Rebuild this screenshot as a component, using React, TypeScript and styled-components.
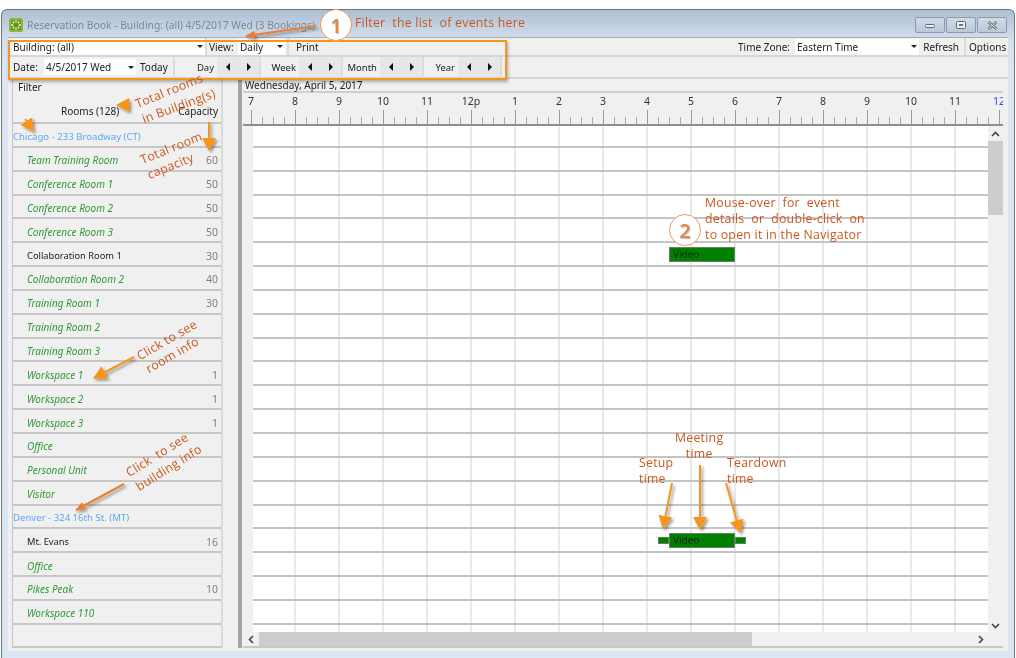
import * as React from "react";
import styled, { createGlobalStyle } from "styled-components";

const ORANGE = "#f7941d";
const NOTE = "#c8581c";
const ROW_HEIGHT = 23.85;

const GlobalStyle = createGlobalStyle`
  html, body {
    margin: 0;
    padding: 0;
    background: white;
  }
`;

const Page = styled.div`
  position: relative;
  width: 1016px;
  height: 658px;
  padding: 9px 1px 0;
  box-sizing: border-box;
  overflow: hidden;
  background: white;
  font-family: "Noto Sans", "Liberation Sans", sans-serif;
  font-size: 10px;
  color: #222;
  filter: blur(0.35px);
`;

const Window = styled.div`
  display: flex;
  flex-direction: column;
  height: 649px;
  padding: 0 6px 7px;
  box-sizing: border-box;
  border: 1px solid #70757c;
  border-bottom: none;
  border-radius: 6px 6px 0 0;
  background: linear-gradient(to bottom, #aebfd3 0, #d3dfec 30px, #dbe7f4 60px);
`;

const TitleBar = styled.div`
  display: flex;
  align-items: center;
  height: 27px;
  flex: none;
`;

const AppIcon = styled.svg`
  width: 14px;
  height: 14px;
  margin: 2px 4px 0 1px;
  flex: none;
`;

const Title = styled.div`
  flex: 1;
  margin-top: 2px;
  font-size: 10.3px;
  color: #7f8894;
  white-space: nowrap;
`;

const WindowButtons = styled.div`
  display: flex;
  gap: 1px;
  margin: 3px 1px 0 0;
`;

const WindowButton = styled.div`
  display: flex;
  align-items: center;
  justify-content: center;
  width: 28px;
  height: 14px;
  border: 1px solid #8c9aad;
  border-radius: 2px;
  background: linear-gradient(to bottom, #d0dbe8, #b9c8da);
  color: #555;
`;

const Client = styled.div`
  flex: 1;
  display: flex;
  flex-direction: column;
  min-height: 0;
  border-top: 1px solid #a5adb5;
  background: #f0f0f0;
`;

const ToolRow = styled.div<{ $height: number }>`
  display: flex;
  align-items: center;
  flex: none;
  height: ${(p) => p.$height}px;
  padding-left: 5px;
  border-bottom: 2px solid #d6d6d6;
  white-space: nowrap;
`;

const Combo = styled.div<{ $width: number; $flush?: boolean }>`
  display: flex;
  align-items: center;
  justify-content: space-between;
  flex: none;
  width: ${(p) => p.$width}px;
  height: 16px;
  box-sizing: border-box;
  padding: 0 2px 0 ${(p) => (p.$flush ? 0 : 2)}px;
  background: white;
`;

const ComboArrow = styled.span`
  width: 0;
  height: 0;
  border-left: 3px solid transparent;
  border-right: 3px solid transparent;
  border-top: 3px solid #222;
`;

const Label = styled.span<{ $width?: number; $right?: boolean; $inset?: number }>`
  flex: none;
  box-sizing: border-box;
  ${(p) => (p.$width ? `width: ${p.$width}px;` : "")}
  ${(p) => (p.$right ? "text-align: right;" : "")}
  ${(p) => (p.$inset ? `padding-left: ${p.$inset}px;` : "")}
`;

const Separator = styled.div<{ $gap?: number }>`
  flex: none;
  width: 2px;
  height: 100%;
  margin-left: ${(p) => p.$gap ?? 0}px;
  background: #dcdcdc;
`;

const Spacer = styled.div`
  flex: 1;
`;

const NavGroup = styled.div<{ $width: number }>`
  display: flex;
  align-items: center;
  justify-content: flex-end;
  flex: none;
  width: ${(p) => p.$width}px;
  height: 100%;
  box-sizing: border-box;
  border-right: 2px solid #dcdcdc;
`;

const NavLabel = styled.span`
  margin-right: 3px;
  font-size: 9.5px;
`;

const NavButton = styled.div`
  display: flex;
  align-items: center;
  justify-content: center;
  flex: none;
  width: 21px;
  height: 100%;
  background: #e7e7e7;
`;

const ArrowLeft = styled.span`
  border-top: 4px solid transparent;
  border-bottom: 4px solid transparent;
  border-right: 4px solid #111;
`;

const ArrowRight = styled.span`
  border-top: 4px solid transparent;
  border-bottom: 4px solid transparent;
  border-left: 4px solid #111;
`;

const Body = styled.div`
  flex: 1;
  display: flex;
  min-height: 0;
  padding: 0 5px 3px 4px;
`;

const Sidebar = styled.div`
  display: flex;
  flex-direction: column;
  flex: none;
  width: 211px;
  border-left: 1px solid #c4c4c4;
  border-right: 2px solid #dadada;
  border-bottom: 2px solid #c8c8c8;
  box-sizing: border-box;
`;

const FilterLabel = styled.div`
  height: 22px;
  padding: 1px 0 0 5px;
  box-sizing: border-box;
`;

const SidebarHeader = styled.div`
  display: flex;
  justify-content: space-between;
  flex: none;
  height: 18px;
  padding: 3px 3px 0 48px;
  border-bottom: 2px solid #c6c6c6;
`;

const Row = styled.div`
  display: flex;
  align-items: center;
  justify-content: space-between;
  flex: none;
  height: ${ROW_HEIGHT}px;
  box-sizing: border-box;
  padding: 3px 3px 0 0;
  border-bottom: 2px solid #c6c6c6;
`;

const RoomName = styled.span<{ $plain: boolean }>`
  padding-left: 14px;
  font-size: ${(p) => (p.$plain ? 9.3 : 10)}px;
  font-style: ${(p) => (p.$plain ? "normal" : "italic")};
  color: ${(p) => (p.$plain ? "#222" : "#2f9a35")};
`;

const BuildingName = styled.span`
  font-size: 9.6px;
  color: #5ca8f5;
`;

const Capacity = styled.span`
  font-size: 10.5px;
  color: #808080;
`;

const Splitter = styled.div`
  flex: none;
  width: 4px;
  margin-left: 15px;
  background: #a4a4a4;
`;

const Schedule = styled.div`
  flex: 1;
  display: flex;
  flex-direction: column;
  min-width: 0;
  margin-left: 1px;
  border-bottom: 2px solid #c8c8c8;
`;

const DateHeader = styled.div`
  display: flex;
  align-items: center;
  flex: none;
  height: 12px;
  padding-left: 2px;
  border-bottom: 2px solid #cfcfcf;
`;

const Ruler = styled.div`
  position: relative;
  flex: none;
  height: 31px;
  overflow: hidden;
  border-bottom: 2px solid #8e8e8e;
`;

const HourLabel = styled.span<{ $blue: boolean }>`
  position: absolute;
  top: 1px;
  transform: translateX(-50%);
  font-size: 10.5px;
  color: ${(p) => (p.$blue ? "#3a3aff" : "#333")};
`;

const Ticks = styled.div`
  position: absolute;
  left: 8px;
  right: 0;
  bottom: 0;
  height: 14px;
  background-image: linear-gradient(to right, #999 1px, transparent 1px),
    linear-gradient(to right, #aaa 1px, transparent 1px);
  background-size: 44px 14px, 11px 7px;
  background-repeat: repeat-x;
  background-position: 0 0, 0 100%;
`;

const GridArea = styled.div`
  flex: 1;
  display: grid;
  grid-template-columns: 1fr 15px;
  grid-template-rows: 1fr 14px;
  min-height: 0;
`;

const Grid = styled.div`
  position: relative;
  margin-left: 10px;
  overflow: hidden;
  background-color: white;
  background-image: linear-gradient(to right, #e8e8e8 2px, transparent 2px);
  background-size: 44px 100%;
  background-position: 41px 0;
`;

const GridRow = styled.div`
  height: ${ROW_HEIGHT}px;
  box-sizing: border-box;
  border-bottom: 2px solid #c4c4c4;

  &:first-child {
    margin-top: -2px;
  }
`;

const EventBar = styled.div<{ $left: number; $top: number; $width: number }>`
  position: absolute;
  left: ${(p) => p.$left}px;
  top: ${(p) => p.$top}px;
  width: ${(p) => p.$width}px;
  height: 15px;
  box-sizing: border-box;
  padding-left: 3px;
  line-height: 13px;
  border: 1px solid #6c7c6c;
  background: #008000;
  color: #0b2b0b;
`;

const Buffer = styled.div<{ $left: number; $top: number }>`
  position: absolute;
  left: ${(p) => p.$left}px;
  top: ${(p) => p.$top}px;
  width: 11px;
  height: 7px;
  box-sizing: border-box;
  border: 1px solid #5f7f5f;
  background: #008000;
`;

const VScroll = styled.div`
  display: flex;
  flex-direction: column;
  align-items: center;
  padding-top: 1px;
  background: #f0f0f0;
`;

const VThumb = styled.div`
  flex: none;
  width: 100%;
  height: 74px;
  margin-bottom: auto;
  background: #cdcdcd;
`;

const HScroll = styled.div`
  display: flex;
  align-items: center;
  padding-left: 1px;
  background: #f0f0f0;
`;

const HThumb = styled.div`
  flex: none;
  width: 493px;
  height: 100%;
  margin-right: auto;
  background: #cdcdcd;
`;

const ScrollButton = styled.div`
  display: flex;
  align-items: center;
  justify-content: center;
  flex: none;
  width: 15px;
  height: 14px;
  color: #444;
`;

const Overlay = styled.div`
  position: absolute;
  inset: 0;
  pointer-events: none;
`;

const Note = styled.div<{ $x: number; $y: number; $rotate?: number; $center?: boolean }>`
  position: absolute;
  left: ${(p) => p.$x}px;
  top: ${(p) => p.$y}px;
  transform: rotate(${(p) => p.$rotate ?? 0}deg);
  transform-origin: left top;
  font-family: "Open Sans", "Noto Sans", sans-serif;
  font-size: 12.3px;
  line-height: 16px;
  letter-spacing: 0.25px;
  color: ${NOTE};
  text-align: ${(p) => (p.$center ? "center" : "left")};
  white-space: pre;
`;

const Badge = styled.div<{ $x: number; $y: number }>`
  position: absolute;
  left: ${(p) => p.$x}px;
  top: ${(p) => p.$y}px;
  display: flex;
  align-items: center;
  justify-content: center;
  width: 32px;
  height: 32px;
  box-sizing: border-box;
  border: 1px solid #ef9a62;
  border-radius: 50%;
  background: white;
  font-family: "Open Sans", "Noto Sans", sans-serif;
  font-size: 20px;
  font-weight: 600;
  color: #e58646;
  text-shadow: 1px 1px 1px #bbb;
`;

const Highlight = styled.div`
  position: absolute;
  left: 8px;
  top: 40px;
  width: 499px;
  height: 40px;
  box-sizing: border-box;
  border: 2px solid ${ORANGE};
  box-shadow: 1px 2px 3px rgba(0, 0, 0, 0.3);
`;

const Arrows = styled.svg`
  position: absolute;
  left: 0;
  top: 0;
  width: 1016px;
  height: 658px;
`;

const rooms: [string, boolean, string][] = [
  ["Team Training Room", false, "60"],
  ["Conference Room 1", false, "50"],
  ["Conference Room 2", false, "50"],
  ["Conference Room 3", false, "50"],
  ["Collaboration Room 1", true, "30"],
  ["Collaboration Room 2", false, "40"],
  ["Training Room 1", false, "30"],
  ["Training Room 2", false, ""],
  ["Training Room 3", false, ""],
  ["Workspace 1", false, "1"],
  ["Workspace 2", false, "1"],
  ["Workspace 3", false, "1"],
  ["Office", false, ""],
  ["Personal Unit", false, ""],
  ["Visitor", false, ""],
];

const denverRooms: [string, boolean, string][] = [
  ["Mt. Evans", true, "16"],
  ["Office", false, ""],
  ["Pikes Peak", false, "10"],
  ["Workspace 110", false, ""],
];

const hours = ["7", "8", "9", "10", "11", "12p", "1", "2", "3", "4", "5", "6", "7", "8", "9", "10", "11", "12"];

// from, to in page pixels, arrow head drawn by the marker
const arrowLines = [
  { x1: 316, y1: 26, x2: 246, y2: 36, color: "#ed7d31", head: "thin" },
  { x1: 209, y1: 122, x2: 209, y2: 150, color: ORANGE, head: "fat" },
  { x1: 25, y1: 119, x2: 33, y2: 131, color: ORANGE, head: "fat" },
  { x1: 130, y1: 105, x2: 117, y2: 105, color: ORANGE, head: "fat" },
  { x1: 134, y1: 357, x2: 94, y2: 378, color: ORANGE, head: "fat" },
  { x1: 124, y1: 484, x2: 76, y2: 510, color: "#ed7d31", head: "thin" },
  { x1: 672, y1: 483, x2: 663, y2: 528, color: ORANGE, head: "fat" },
  { x1: 700, y1: 465, x2: 700, y2: 529, color: ORANGE, head: "fat" },
  { x1: 726, y1: 483, x2: 740, y2: 532, color: ORANGE, head: "fat" },
];

const NavControl = ({ label, width }: { label: string; width: number }) => (
  <NavGroup $width={width}>
    <NavLabel>{label}</NavLabel>
    <NavButton>
      <ArrowLeft />
    </NavButton>
    <NavButton>
      <ArrowRight />
    </NavButton>
  </NavGroup>
);

const RoomRow = ({ room }: { room: [string, boolean, string] }) => (
  <Row>
    <RoomName $plain={room[1]}>{room[0]}</RoomName>
    <Capacity>{room[2]}</Capacity>
  </Row>
);

const Chevron = ({ d }: { d: string }) => (
  <svg width="9" height="9" viewBox="0 0 9 9" fill="none" stroke="#444" strokeWidth="1.6">
    <path d={d} />
  </svg>
);

export default function App() {
  return (
    <Page>
      <GlobalStyle />
      <Window>
        <TitleBar>
          <AppIcon viewBox="0 0 14 14">
            <rect x="0" y="0" width="14" height="14" rx="2" fill="#8db53c" />
            <rect x="2" y="2" width="10" height="10" fill="#5f8f1f" />
            <g stroke="#f4f0a0" strokeWidth="1.4">
              <path d="M7 2v2.5M7 9.5V12M2 7h2.5M9.500 7H12M3.500 3.500l1.800 1.800M8.700 8.700l1.800 1.800M10.500 3.500L8.700 5.300M5.300 8.700l-1.800 1.800" />
            </g>
          </AppIcon>
          <Title>Reservation Book - Building: (all) 4/5/2017 Wed (3 Bookings)</Title>
          <WindowButtons>
            <WindowButton>
              <svg width="11" height="7" viewBox="0 0 11 7">
                <rect x="0.5" y="2.500" width="9" height="3" rx="1" fill="#e8eef5" stroke="#666" />
              </svg>
            </WindowButton>
            <WindowButton>
              <svg width="11" height="9" viewBox="0 0 11 9">
                <rect x="0.5" y="0.5" width="9" height="7" rx="1" fill="#e8eef5" stroke="#666" />
                <rect x="3" y="3" width="4" height="2" fill="#777" />
              </svg>
            </WindowButton>
            <WindowButton>
              <svg width="11" height="9" viewBox="0 0 11 9">
                <path d="M1.500 1l8 7M9.500 1l-8 7" stroke="#666" strokeWidth="2.400" />
                <path d="M1.500 1l8 7M9.500 1l-8 7" stroke="#eef2f7" strokeWidth="1" />
              </svg>
            </WindowButton>
          </WindowButtons>
        </TitleBar>
        <Client>
          <ToolRow $height={17}>
            <Combo $width={192} $flush>
              Building: (all)
              <ComboArrow />
            </Combo>
            <Separator />
            <Label $width={31} $inset={2}>View:</Label>
            <Combo $width={47}>
              Daily
              <ComboArrow />
            </Combo>
            <Separator $gap={2} />
            <Label $inset={7}>Print</Label>
            <Spacer />
            <Label $width={57}>Time Zone:</Label>
            <Combo $width={124}>
              Eastern Time
              <ComboArrow />
            </Combo>
            <Label $width={40} $right>Refresh</Label>
            <Separator $gap={5} />
            <Label $width={42} $inset={3}>Options</Label>
          </ToolRow>
          <ToolRow $height={20}>
            <Label $width={31}>Date:</Label>
            <Combo $width={92}>
              4/5/2017 Wed
              <ComboArrow />
            </Combo>
            <Label $width={37} $inset={4}>Today</Label>
            <Separator />
            <NavControl label="Day" width={86} />
            <NavControl label="Week" width={82} />
            <NavControl label="Month" width={81} />
            <NavControl label="Year" width={78} />
          </ToolRow>
          <Body>
            <Sidebar>
              <FilterLabel>Filter</FilterLabel>
              <SidebarHeader>
                <span>Rooms (128)</span>
                <span>Capacity</span>
              </SidebarHeader>
              <Row>
                <BuildingName>Chicago - 233 Broadway (CT)</BuildingName>
              </Row>
              {rooms.map((room, i) => (
                <RoomRow key={i} room={room} />
              ))}
              <Row>
                <BuildingName>Denver - 324 16th St. (MT)</BuildingName>
              </Row>
              {denverRooms.map((room, i) => (
                <RoomRow key={i} room={room} />
              ))}
            </Sidebar>
            <Splitter />
            <Schedule>
              <DateHeader>Wednesday, April 5, 2017</DateHeader>
              <Ruler>
                {hours.map((h, i) => (
                  <HourLabel key={i} $blue={i === hours.length - 1} style={{ left: 8 + i * 44 }}>
                    {h}
                  </HourLabel>
                ))}
                <Ticks />
              </Ruler>
              <GridArea>
                <Grid>
                  {Array.from({ length: 22 }).map((_, i) => (
                    <GridRow key={i} />
                  ))}
                  <EventBar $left={416} $top={121} $width={66}>Video</EventBar>
                  <Buffer $left={405} $top={411} />
                  <EventBar $left={416} $top={407} $width={66}>Video</EventBar>
                  <Buffer $left={482} $top={411} />
                </Grid>
                <VScroll>
                  <ScrollButton>
                    <Chevron d="M1 6l3.500-3.500L8 6" />
                  </ScrollButton>
                  <VThumb />
                  <ScrollButton>
                    <Chevron d="M1 3l3.500 3.500L8 3" />
                  </ScrollButton>
                </VScroll>
                <HScroll>
                  <ScrollButton>
                    <Chevron d="M6 1L2.500 4.500 6 8" />
                  </ScrollButton>
                  <HThumb />
                  <ScrollButton>
                    <Chevron d="M3 1l3.500 3.500L3 8" />
                  </ScrollButton>
                </HScroll>
              </GridArea>
            </Schedule>
          </Body>
        </Client>
      </Window>
      <Overlay>
        <Highlight />
        <Arrows viewBox="0 0 1016 658">
          <defs>
            <filter id="soft" filterUnits="userSpaceOnUse" x="0" y="0" width="1016" height="658">
              <feDropShadow dx="2" dy="2" stdDeviation="1.500" floodColor="#000" floodOpacity="0.4" />
            </filter>
            <marker id="fat" markerUnits="userSpaceOnUse" markerWidth="14" markerHeight="14" refX="12" refY="7" orient="auto">
              <path d="M0 0L13 7L0 14z" fill={ORANGE} />
            </marker>
            <marker id="thin" markerUnits="userSpaceOnUse" markerWidth="10" markerHeight="10" refX="9" refY="5" orient="auto">
              <path d="M0 1L10 5L0 9z" fill="#ed7d31" />
            </marker>
          </defs>
          {arrowLines.map((a, i) => (
            <line
              key={i}
              x1={a.x1}
              y1={a.y1}
              x2={a.x2}
              y2={a.y2}
              stroke={a.color}
              strokeWidth="2"
              markerEnd={`url(#${a.head})`}
              filter="url(#soft)"
            />
          ))}
        </Arrows>
        <Badge $x={320} $y={9}>1</Badge>
        <Note $x={355} $y={15}>Filter  the list  of events here</Note>
        <Badge $x={669} $y={214}>2</Badge>
        <Note $x={705} $y={195}>{"Mouse-over  for  event\ndetails  or  double-click  on\nto open it in the Navigator"}</Note>
        <Note $x={133} $y={97} $rotate={-22}>Total rooms</Note>
        <Note $x={140} $y={112} $rotate={-20}>in Building(s)</Note>
        <Note $x={138} $y={153} $rotate={-22}>Total room</Note>
        <Note $x={145} $y={168} $rotate={-22}>capacity</Note>
        <Note $x={134} $y={350} $rotate={-30}>Click to see</Note>
        <Note $x={143} $y={363} $rotate={-30}>room info</Note>
        <Note $x={123} $y={467} $rotate={-32}>Click  to see</Note>
        <Note $x={133} $y={481} $rotate={-32}>building info</Note>
        <Note $x={675} $y={430} $center>{"Meeting\ntime"}</Note>
        <Note $x={639} $y={455}>{"Setup\ntime"}</Note>
        <Note $x={727} $y={455}>{"Teardown\ntime"}</Note>
      </Overlay>
    </Page>
  );
}
